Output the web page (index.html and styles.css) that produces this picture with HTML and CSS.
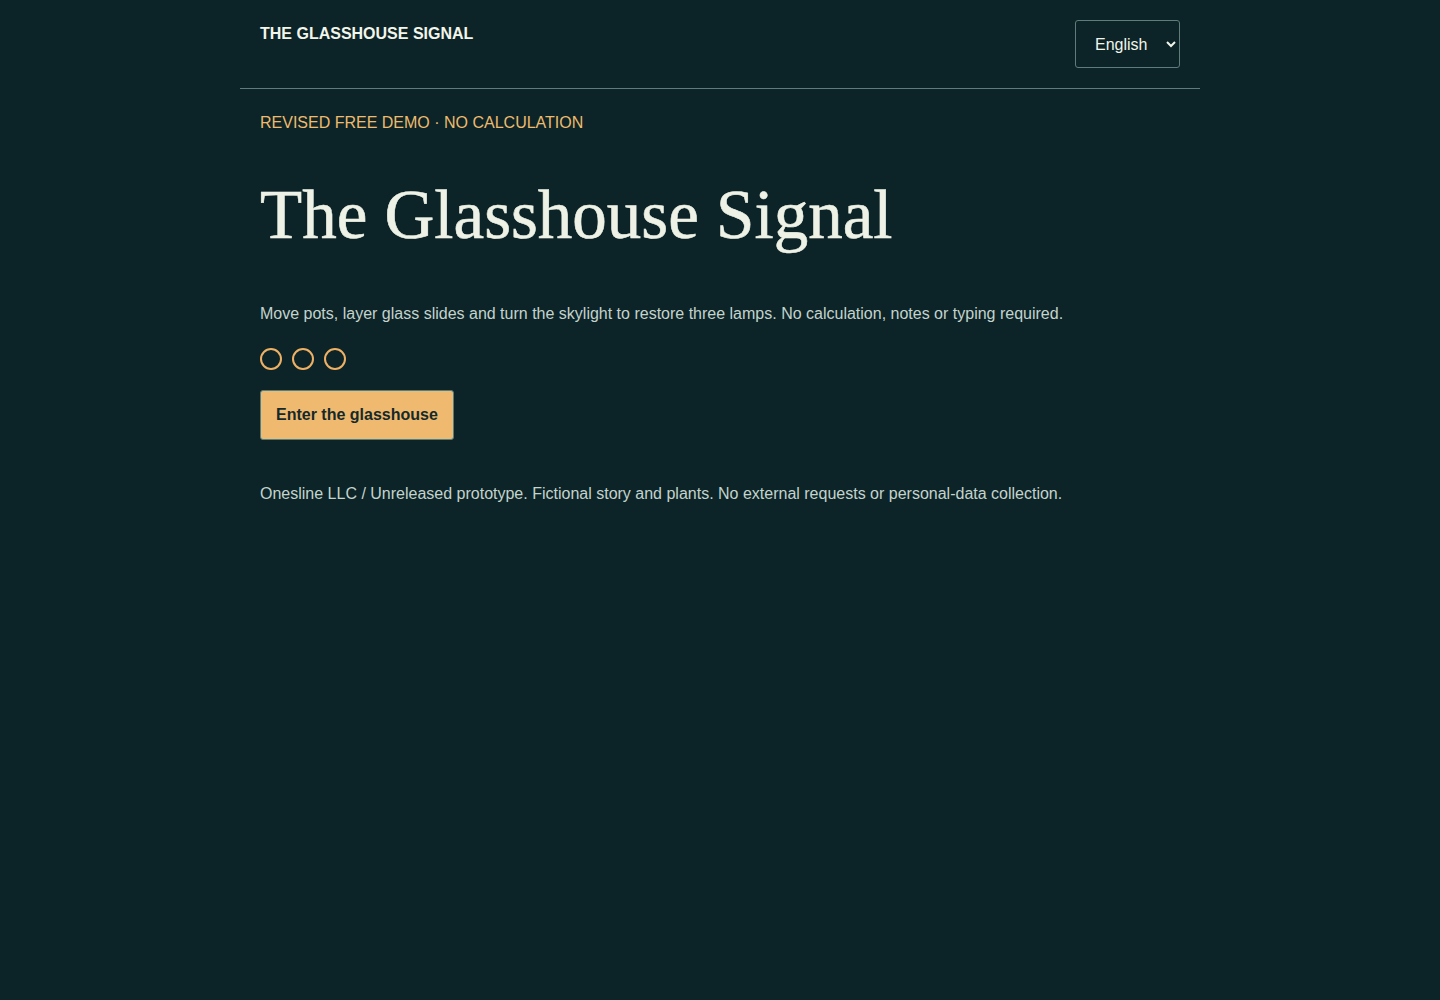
FILE: index.html
```html
<!DOCTYPE html>
<html lang="en">
<head>
<meta charset="utf-8">
<title>The Glasshouse Signal</title>
<link rel="stylesheet" href="styles.css">
</head>
<body>
<div class="page">
  <header class="topbar">
    <div class="brand">THE GLASSHOUSE SIGNAL</div>
    <select class="lang">
      <option>English</option>
    </select>
  </header>
  <main class="hero">
    <p class="eyebrow">REVISED FREE DEMO · NO CALCULATION</p>
    <h1 class="title">The Glasshouse Signal</h1>
    <p class="lead">Move pots, layer glass slides and turn the skylight to restore three lamps. No calculation, notes or typing required.</p>
    <div class="lamps">
      <span class="lamp"></span>
      <span class="lamp"></span>
      <span class="lamp"></span>
    </div>
    <button class="cta">Enter the glasshouse</button>
    <p class="foot">Onesline LLC / Unreleased prototype. Fictional story and plants. No external requests or personal-data collection.</p>
  </main>
</div>
</body>
</html>
```
FILE: styles.css
```css
html, body {
  margin: 0;
  padding: 0;
  background: #0c2427;
  min-height: 100%;
}
body {
  font-family: "Liberation Sans", Arial, sans-serif;
  color: #eef2e6;
}
.page {
  width: 960px;
  margin: 0 auto;
}
.topbar {
  display: flex;
  justify-content: space-between;
  align-items: flex-start;
  padding: 20px 20px 20px;
  border-bottom: 1px solid #5e7c7a;
}
.brand {
  font-weight: 700;
  font-size: 16px;
  padding-top: 5px;
  color: #f2f5ea;
}
.lang {
  height: 48px;
  width: 105px;
  padding: 0 6px 0 15px;
  background: #0c2427;
  color: #f2f5ea;
  border: 1px solid #5e7c7a;
  border-radius: 3px;
  font-family: "Liberation Sans", Arial, sans-serif;
  font-size: 16px;
}
.hero {
  padding: 24px 20px;
}
.eyebrow {
  margin: 0;
  color: #eebb6e;
  font-size: 16px;
  line-height: 20px;
}
.title {
  margin: 42px 0 47px;
  font-family: "Liberation Serif", Georgia, serif;
  font-weight: 400;
  font-size: 69px;
  line-height: 80px;
  color: #eef2e6;
  -webkit-text-stroke: 0.6px #eef2e6;
}
.lead {
  margin: 0;
  color: #c3d3cd;
  font-size: 16px;
  line-height: 24px;
}
.lamps {
  display: flex;
  gap: 10px;
  margin-top: 22px;
}
.lamp {
  width: 18px;
  height: 18px;
  border: 2px solid #eeb064;
  border-radius: 50%;
}
.cta {
  margin-top: 20px;
  height: 50px;
  padding: 0 15px;
  background: #efba70;
  color: #15292a;
  border: 1px solid #4f8184;
  border-radius: 3px;
  font-family: "Liberation Sans", Arial, sans-serif;
  font-weight: 700;
  font-size: 16px;
}
.foot {
  margin: 42px 0 0;
  color: #c3d3cd;
  font-size: 16px;
  line-height: 24px;
}
```
